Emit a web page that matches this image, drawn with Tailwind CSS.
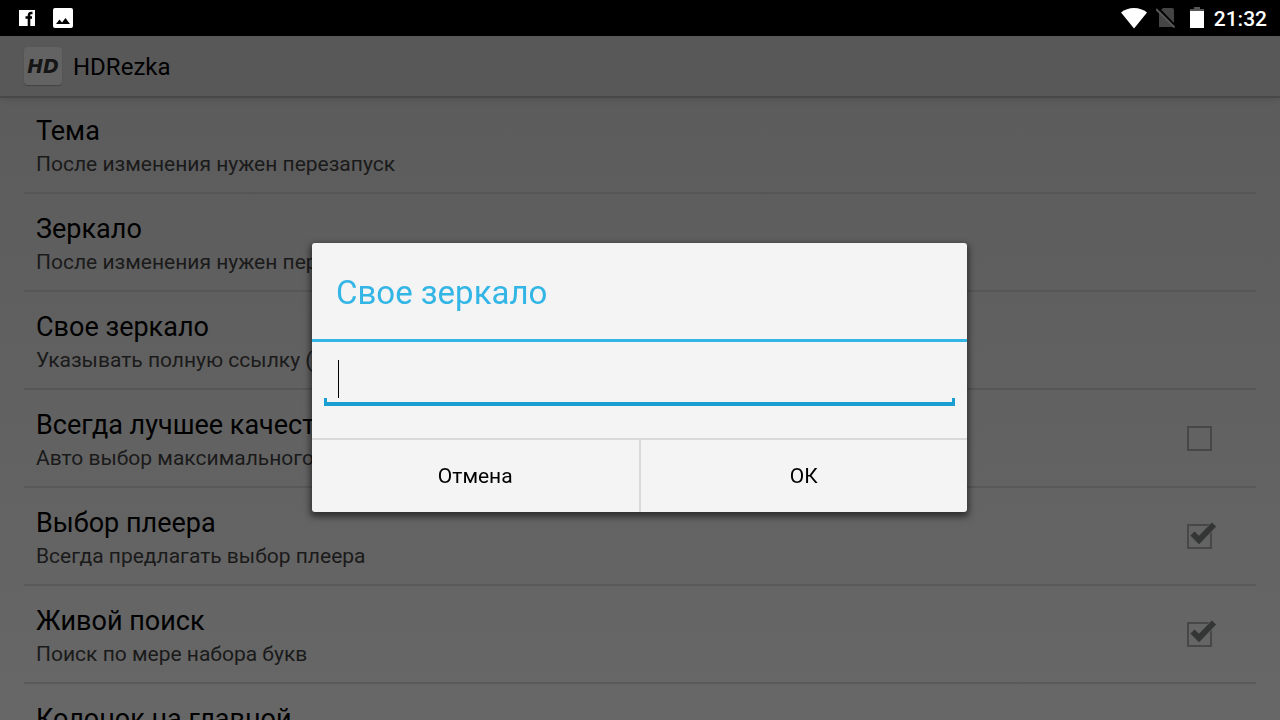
<!DOCTYPE html>
<html lang="ru">
<head>
    <meta charset="UTF-8">
    <meta name="viewport" content="width=device-width, initial-scale=1.0">
    <title>HDRezka</title>
    <script src="https://cdn.jsdelivr.net/npm/@tailwindcss/browser@4"></script>
</head>
<body class="h-screen flex flex-col overflow-hidden bg-linear-to-b from-[#5a5a5a] to-[#676767] font-[Roboto,sans-serif] text-black">
    <!-- Status bar -->
    <div class="h-9 shrink-0 bg-black text-white flex items-center justify-between pl-[19px] pr-[13px]">
        <div class="flex items-center gap-[18px]">
            <svg class="w-4 h-4" viewBox="0 0 16 16" aria-label="Facebook">
                <path d="M0 0h16v16H0z" fill="#fff"/>
                <path d="M13.500 3H12q-2 0-2 2.500V16M6.500 7.500H13" fill="none" stroke="#000" stroke-width="2.600"/>
            </svg>
            <svg class="w-5 h-5" viewBox="0 0 20 20">
                <rect width="20" height="20" rx="2" fill="#fff"/>
                <path d="M3 16l3.500-4.500 2.500 3L12.500 10l4.500 6z" fill="#000"/>
            </svg>
        </div>
        <div class="flex items-center">
            <svg class="w-[26px] h-[21px]" viewBox="0 0 26 21">
                <path d="M13 20.500L0 4.500Q5.500 0 13 0t13 4.500z" fill="#fff"/>
            </svg>
            <svg class="w-5 h-5 ml-[9px]" viewBox="0 0 20 20">
                <path d="M7 0h9q2 0 2 2v17H3V4z" fill="#444"/>
                <path d="M2 0l18 18.500" stroke="#000" stroke-width="2"/>
                <path d="M0 1l18.500 18.500" stroke="#555" stroke-width="2"/>
            </svg>
            <svg class="w-[14px] h-[22px] ml-[14px]" viewBox="0 0 14 22">
                <path d="M4 0h6v2h4v3H0V2h4z" fill="#555"/>
                <path d="M0 4h14v17H0z" fill="#fff"/>
            </svg>
            <span class="ml-2.5 pt-0.5 text-[21px] leading-7 font-medium">21:32</span>
        </div>
    </div>

    <!-- Action bar -->
    <header class="relative h-15 shrink-0 flex items-center gap-[11px] px-6 bg-[#585858] shadow-[0_2px_0_#484848,0_4px_6px_rgba(0,0,0,0.1)]">
        <div class="w-[38px] h-[38px] rounded-sm bg-[#636363] shadow-[0_1px_1px_#444] flex items-center justify-center">
            <span class="font-['DejaVu_Sans',sans-serif] font-bold italic text-[19px] leading-none text-[#151515]">HD</span>
        </div>
        <h1 class="pt-0.5 text-[24px] leading-8">HDRezka</h1>
    </header>

    <!-- Preferences -->
    <main class="flex-1 min-h-0 overflow-hidden px-6">
        <ul>
            <li class="h-[98px] border-b-2 border-[#565656] px-3 pt-1 flex flex-col justify-center">
                <h2 class="text-[27px] leading-9">Тема</h2>
                <p class="text-[21px] leading-[30px] text-[#1a1a1a]">После изменения нужен перезапуск</p>
            </li>
            <li class="h-[98px] border-b-2 border-[#565656] px-3 pt-1 flex flex-col justify-center">
                <h2 class="text-[27px] leading-9">Зеркало</h2>
                <p class="text-[21px] leading-[30px] text-[#1a1a1a]">После изменения нужен перезапуск</p>
            </li>
            <li class="h-[98px] border-b-2 border-[#565656] px-3 pt-1 flex flex-col justify-center">
                <h2 class="text-[27px] leading-9">Свое зеркало</h2>
                <p class="text-[21px] leading-[30px] text-[#1a1a1a]">Указывать полную ссылку (с http://)</p>
            </li>
            <li class="h-[98px] border-b-2 border-[#585858] px-3 flex items-center justify-between">
                <label for="quality" class="pt-1">
                    <span class="block text-[27px] leading-9">Всегда лучшее качество</span>
                    <span class="block text-[21px] leading-[30px] text-[#1a1a1a]">Авто выбор максимального качества</span>
                </label>
                <input id="quality" type="checkbox" class="appearance-none w-[25px] h-[25px] mr-8 border-2 border-[#474747]">
            </li>
            <li class="h-[98px] border-b-2 border-[#595959] px-3 flex items-center justify-between">
                <label for="player" class="pt-1">
                    <span class="block text-[27px] leading-9">Выбор плеера</span>
                    <span class="block text-[21px] leading-[30px] text-[#1a1a1a]">Всегда предлагать выбор плеера</span>
                </label>
                <div class="relative mr-8 w-[25px] h-[25px]">
                    <input id="player" type="checkbox" checked class="peer block appearance-none w-[25px] h-[25px] border-2 border-[#474747]">
                    <svg class="absolute left-0 -top-1 w-[30px] h-[30px] pointer-events-none invisible peer-checked:visible" viewBox="0 0 30 30">
                        <path d="M5.500 14l6.500 6.500L26.500 5" fill="none" stroke="#636363" stroke-width="7"/>
                        <path d="M5.500 13.500l6.500 6.500L27 4.500" fill="none" stroke="#343635" stroke-width="6"/>
                    </svg>
                </div>
            </li>
            <li class="h-[98px] border-b-2 border-[#5a5a5a] px-3 flex items-center justify-between">
                <label for="search" class="pt-1">
                    <span class="block text-[27px] leading-9">Живой поиск</span>
                    <span class="block text-[21px] leading-[30px] text-[#1a1a1a]">Поиск по мере набора букв</span>
                </label>
                <div class="relative mr-8 w-[25px] h-[25px]">
                    <input id="search" type="checkbox" checked class="peer block appearance-none w-[25px] h-[25px] border-2 border-[#474747]">
                    <svg class="absolute left-0 -top-1 w-[30px] h-[30px] pointer-events-none invisible peer-checked:visible" viewBox="0 0 30 30">
                        <path d="M5.500 14l6.500 6.500L26.500 5" fill="none" stroke="#656565" stroke-width="7"/>
                        <path d="M5.500 13.500l6.500 6.500L27 4.500" fill="none" stroke="#343635" stroke-width="6"/>
                    </svg>
                </div>
            </li>
            <li class="h-[98px] border-b-2 border-[#5a5a5a] px-3 pt-1 flex flex-col justify-center">
                <h2 class="text-[27px] leading-9">Колонок на главной</h2>
            	<p class="text-[21px] leading-[30px] text-[#1a1a1a]">Количество</p>
            </li>
        </ul>
    </main>

    <!-- Mirror dialog -->
    <div class="fixed inset-x-0 top-9 bottom-0 pr-px pb-0.5 flex items-center justify-center">
        <form role="dialog" aria-labelledby="dialogTitle" class="w-[655px] max-w-full rounded-[3px] overflow-hidden bg-[#f4f4f4] shadow-[0_3px_6px_2px_rgba(0,0,0,0.5)]">
            <h2 class="px-6 pt-[30px] pb-[26px] text-[33px] leading-10 text-[#33b5e5]" id="dialogTitle">Свое зеркало</h2>
            <div class="border-t-3 border-[#33b5e5] px-3 pt-4 pb-8">
                <div class="relative h-12">
                    <input type="text" aria-labelledby="dialogTitle" class="block w-full h-12 px-3 text-[27px] outline-none caret-transparent border-b-4 border-[#1a9fd3]">
                    <span class="absolute left-0 bottom-0 w-[3px] h-2 bg-[#1a9fd3]"></span>
                    <span class="absolute right-0 bottom-0 w-[3px] h-2 bg-[#1a9fd3]"></span>
                    <!-- text cursor -->
                    <span class="absolute left-3.5 top-0.5 w-px h-[38px] bg-black"></span>
                </div>
            </div>
            <div class="flex border-t-2 border-[#d7dad9] text-[21px]">
                <button type="button" class="flex-1 h-18 pt-0.5 border-r-2 border-[#d7dad9]">Отмена</button>
                <button type="submit" class="flex-1 h-18 pt-0.5">ОК</button>
            </div>
        </form>
    </div>
</body>
</html>
